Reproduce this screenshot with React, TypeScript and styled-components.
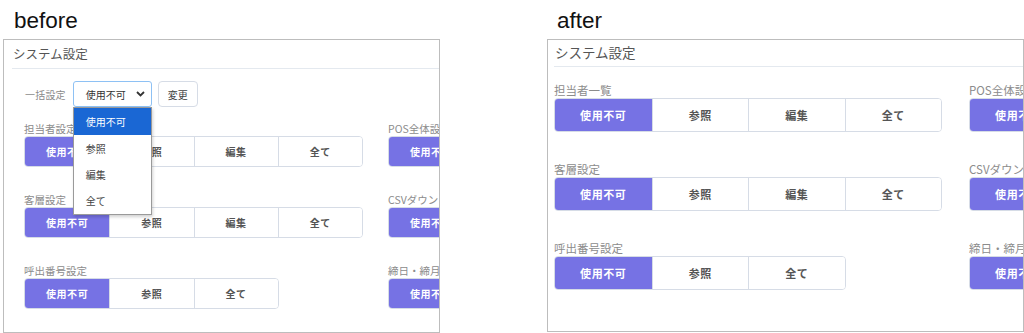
import styled, { createGlobalStyle } from 'styled-components'

interface Scale {
  title: number
  header: number
  headerLine: number
  indent: number
  bodyPad: number
  bodyTop: number
  label: number
  labelLine: number
  segW: number
  segH: number
  segFont: number
  colGap: number
  rowGap: number
  panelW: number
  panelH: number
}

const before: Scale = {
  title: 12.5,
  header: 28,
  headerLine: 28,
  indent: 8,
  bodyPad: 20,
  bodyTop: 12,
  label: 10.5,
  labelLine: 14,
  segW: 84.25,
  segH: 31,
  segFont: 10,
  colGap: 25,
  rowGap: 26,
  panelW: 437,
  panelH: 294,
}

const after: Scale = {
  title: 13.5,
  header: 26,
  headerLine: 24,
  indent: 6,
  bodyPad: 6,
  bodyTop: 15,
  label: 11.5,
  labelLine: 16,
  segW: 96.5,
  segH: 34,
  segFont: 11,
  colGap: 27,
  rowGap: 29,
  panelW: 477,
  panelH: 293,
}

const PURPLE = '#7672e4'
const LINE = '#d6dce6'

const GlobalStyle = createGlobalStyle`
  html, body {
    margin: 0;
    padding: 0;
    background: #fff;
    overflow: hidden;
  }
  body {
    font-family: "Noto Sans CJK JP", "Noto Sans", sans-serif;
  }
`

const Page = styled.div`
  display: flex;
  align-items: flex-start;
  gap: 107px;
  padding-left: 3px;
  width: 1024px;
  height: 333px;
  overflow: hidden;
`

const Figure = styled.div`
  display: flex;
  flex-direction: column;
  flex-shrink: 0;
`

const Caption = styled.div<{ $pad: number }>`
  height: 39px;
  box-sizing: border-box;
  padding: 10px 0 0 ${(p) => p.$pad}px;
  font-family: "Liberation Sans", Arial, sans-serif;
  font-size: 22.5px;
  line-height: 22px;
  color: #111;
`

const Panel = styled.div<{ $s: Scale }>`
  position: relative;
  width: ${(p) => p.$s.panelW}px;
  height: ${(p) => p.$s.panelH}px;
  box-sizing: border-box;
  border: 1px solid #bdbdbd;
  overflow: hidden;
  background: #fff;
`

const Header = styled.div<{ $s: Scale }>`
  height: ${(p) => p.$s.header}px;
  margin-left: ${(p) => p.$s.indent}px;
  padding-left: 1px;
  border-bottom: 1px solid #e4e9ef;
  font-size: ${(p) => p.$s.title}px;
  line-height: ${(p) => p.$s.headerLine}px;
  color: #555;
  white-space: nowrap;
`

const Body = styled.div<{ $s: Scale }>`
  padding: ${(p) => p.$s.bodyTop}px 0 0 ${(p) => p.$s.bodyPad}px;
  display: flex;
  flex-direction: column;
`

const BulkRow = styled.div`
  display: flex;
  align-items: center;
  height: 26px;
  margin-bottom: 15px;
`

const BulkLabel = styled.span`
  margin-left: 1px;
  margin-right: 7px;
  font-size: 10px;
  color: #8a8a8a;
  letter-spacing: 0.2px;
`

const SelectWrap = styled.div`
  position: relative;
`

const SelectBox = styled.div`
  width: 79px;
  height: 26px;
  box-sizing: border-box;
  border: 1px solid #8ec1f4;
  border-radius: 3px;
  display: flex;
  align-items: center;
  justify-content: space-between;
  padding: 0 6px 0 12px;
  font-size: 10px;
  color: #333;
`

const Options = styled.ul`
  position: absolute;
  top: 100%;
  left: 0;
  z-index: 2;
  width: 79px;
  margin: 0;
  padding: 0;
  list-style: none;
  box-sizing: border-box;
  border: 1px solid #9a9a9a;
  background: #fff;
  box-shadow: 1px 2px 3px rgba(0, 0, 0, 0.18);
`

const Option = styled.li<{ $on?: boolean; $h: number }>`
  height: ${(p) => p.$h}px;
  line-height: ${(p) => p.$h}px;
  padding-left: 12px;
  font-size: 10px;
  color: ${(p) => (p.$on ? '#fff' : '#444')};
  background: ${(p) => (p.$on ? '#1a67d4' : '#fff')};
`

const ChangeButton = styled.button`
  width: 40px;
  height: 26px;
  margin-left: 6px;
  border: 1px solid ${LINE};
  border-radius: 4px;
  background: #fff;
  font-family: inherit;
  font-size: 10px;
  color: #444;
  padding: 0;
`

const Grid = styled.div<{ $s: Scale }>`
  display: grid;
  grid-template-columns: ${(p) => `${p.$s.segW * 4 + 2}px ${p.$s.segW * 4 + 2}px`};
  column-gap: ${(p) => p.$s.colGap}px;
  row-gap: ${(p) => p.$s.rowGap}px;
`

const Field = styled.div`
  display: flex;
  flex-direction: column;
  align-items: flex-start;
`

const FieldLabel = styled.div<{ $s: Scale }>`
  font-size: ${(p) => p.$s.label}px;
  line-height: ${(p) => p.$s.labelLine}px;
  color: #8c8c8c;
  white-space: nowrap;
`

const Segments = styled.div<{ $s: Scale }>`
  display: flex;
  height: ${(p) => p.$s.segH}px;
  box-sizing: border-box;
  border: 1px solid ${LINE};
  border-radius: 4px;
  overflow: hidden;
  background: #fff;
`

const Segment = styled.div<{ $s: Scale; $on?: boolean }>`
  width: ${(p) => p.$s.segW}px;
  display: flex;
  align-items: center;
  justify-content: center;
  box-sizing: border-box;
  font-size: ${(p) => p.$s.segFont}px;
  font-weight: 600;
  letter-spacing: 0.6px;
  color: ${(p) => (p.$on ? '#fff' : '#555')};
  background: ${(p) => (p.$on ? PURPLE : '#fff')};
  white-space: nowrap;
  & + & {
    border-left: 1px solid ${LINE};
  }
`

const Chevron = () => (
  <svg width="9" height="6" viewBox="0 0 9 6">
    <path d="M1 1l3.5 3.5L8 1" fill="none" stroke="#333" strokeWidth="1.8" />
  </svg>
)

const FULL = ['使用不可', '参照', '編集', '全て']
const SHORT = ['使用不可', '参照', '全て']

const Group = ({ s, options }: { s: Scale; options: string[] }) => (
  <Segments $s={s}>
    {options.map((o, i) => (
      <Segment key={o} $s={s} $on={i === 0}>
        {o}
      </Segment>
    ))}
  </Segments>
)

const Settings = ({ s, first }: { s: Scale; first: string }) => {
  const fields = [
    { label: first, options: FULL },
    { label: 'POS全体設定', options: FULL },
    { label: '客層設定', options: FULL },
    { label: 'CSVダウンロード', options: FULL },
    { label: '呼出番号設定', options: SHORT },
    { label: '締日・締月設定', options: FULL },
  ]
  return (
    <Grid $s={s}>
      {fields.map((f) => (
        <Field key={f.label}>
          <FieldLabel $s={s}>{f.label}</FieldLabel>
          <Group s={s} options={f.options} />
        </Field>
      ))}
    </Grid>
  )
}

export default function App() {
  return (
    <>
      <GlobalStyle />
      <Page>
        <Figure>
          <Caption $pad={11}>before</Caption>
          <Panel $s={before}>
            <Header $s={before}>システム設定</Header>
            <Body $s={before}>
              <BulkRow>
                <BulkLabel>一括設定</BulkLabel>
                <SelectWrap>
                  <SelectBox>
                    <span>使用不可</span>
                    <Chevron />
                  </SelectBox>
                  <Options>
                    <Option $on $h={27}>使用不可</Option>
                    <Option $h={27}>参照</Option>
                    <Option $h={26}>編集</Option>
                    <Option $h={26}>全て</Option>
                  </Options>
                </SelectWrap>
                <ChangeButton>変更</ChangeButton>
              </BulkRow>
              <Settings s={before} first="担当者設定" />
            </Body>
          </Panel>
        </Figure>
        <Figure>
          <Caption $pad={10}>after</Caption>
          <Panel $s={after}>
            <Header $s={after}>システム設定</Header>
            <Body $s={after}>
              <Settings s={after} first="担当者一覧" />
            </Body>
          </Panel>
        </Figure>
      </Page>
    </>
  )
}
